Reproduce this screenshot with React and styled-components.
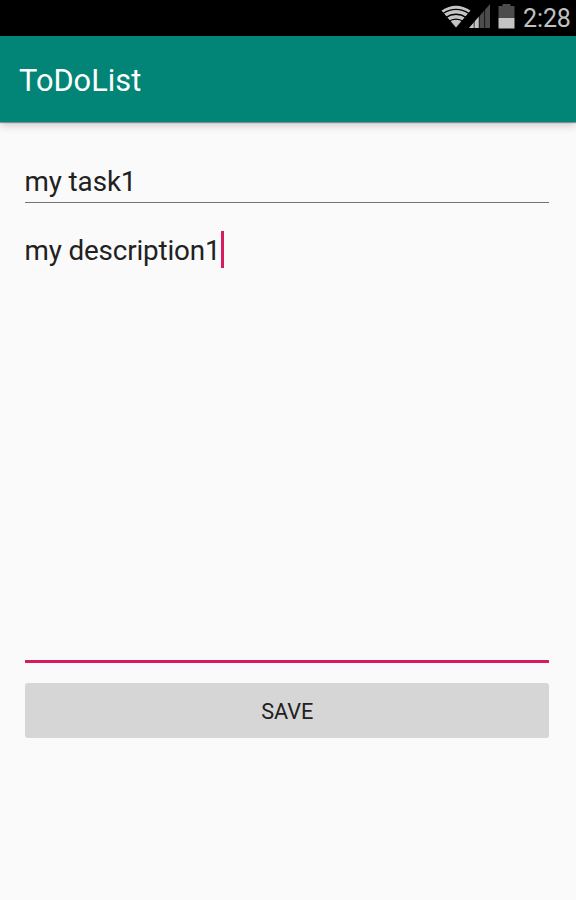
import React from "react";
import styled, { createGlobalStyle } from "styled-components";

const GlobalStyle = createGlobalStyle`
  * { box-sizing: border-box; }
  body { margin: 0; background: #fafafa; overflow: hidden; }
`;

const Screen = styled.div`
  width: 576px;
  height: 900px;
  display: flex;
  flex-direction: column;
  background: #fafafa;
  color: #212121;
  font-family: Roboto, "Liberation Sans", sans-serif;
`;

const StatusBar = styled.header`
  height: 36px;
  flex: none;
  display: flex;
  justify-content: flex-end;
  padding-right: 5px;
  background: #000;
`;

const StatusIcons = styled.svg`
  width: 80px;
  height: 36px;
  flex: none;
`;

const Clock = styled.time`
  margin-left: 3px;
  width: 48px;
  padding-top: 1px;
  white-space: nowrap;
  font-size: 25px;
  line-height: 35px;
  letter-spacing: -0.1px;
  color: #c1c1c1;
`;

const AppBar = styled.div`
  height: 86px;
  flex: none;
  display: flex;
  align-items: center;
  padding: 4px 0 0 19px;
  background: #028577;
  box-shadow: 0 1px 1px rgba(0, 0, 0, 0.36), 0 4px 8px rgba(0, 0, 0, 0.17);
`;

const Title = styled.h1`
  margin: 0;
  font-size: 30.7px;
  line-height: 36px;
  font-weight: 400;
  letter-spacing: 0.05px;
  color: #fff;
`;

const Form = styled.main`
  display: flex;
  flex-direction: column;
  padding: 42px 27px 0 24.5px;
`;

const Field = styled.div`
  display: flex;
  align-items: flex-start;
  height: ${(p) => p.$height}px;
  margin-top: ${(p) => p.$gap || 0}px;
  border-bottom: ${(p) => (p.$focused ? "3px solid #d81b60" : "1px solid #737373")};
`;

const FieldText = styled.span`
  padding-top: ${(p) => p.$drop || 0}px;
  font-size: 27.8px;
  line-height: 36px;
  letter-spacing: ${(p) => p.$tracking || 0}px;
  white-space: nowrap;
`;

const Caret = styled.span`
  width: 3px;
  height: 37px;
  margin-left: 1px;
  background: #d81b60;
`;

const SaveButton = styled.button`
  height: 55px;
  margin-top: 20px;
  padding: 2px 0 0 1px;
  border: 0;
  border-radius: 3px;
  background: #d6d6d6;
  color: #212121;
  font: 400 21.7px/26px Roboto, "Liberation Sans", sans-serif;
`;

function StatusGlyphs() {
  return (
    <StatusIcons viewBox="440 0 80 36" aria-hidden="true">
      <path d="M441.5 10.5Q456 0.8 470.5 10.5L456 27.5Z" fill="#c4c4c4" />
      <g fill="none" stroke="#000" strokeWidth="1.3">
        <path d="M443 13.5Q456 5.3 469 13.5" />
        <path d="M445.5 17.6Q456 10.9 466.5 17.6" />
        <path d="M448.5 21.6Q456 16.6 463.5 21.6" />
      </g>
      <path d="M469 28L490 4V28Z" fill="#4c4c4c" />
      <path d="M469 28L479 16.6V28Z" fill="#c4c4c4" />
      <path d="M474.2 18V28M479.2 14V28M484.6 8V28" stroke="#000" strokeWidth="0.7" />
      <path d="M498.5 6H502.5V4H510.5V6H514.5V18H498.5Z" fill="#4c4c4c" />
      <path d="M498.5 18H514.5V28.5H498.5Z" fill="#c4c4c4" />
    </StatusIcons>
  );
}

export default function App() {
  return (
    <Screen>
      <GlobalStyle />
      <StatusBar>
        <StatusGlyphs />
        <Clock>2:28</Clock>
      </StatusBar>
      <AppBar>
        <Title>ToDoList</Title>
      </AppBar>
      <Form>
        <Field $height={39}>
          <FieldText $tracking={-0.1}>my task1</FieldText>
        </Field>
        <Field $height={432} $gap={28} $focused>
          <FieldText $drop={2} $tracking={-0.15}>my description1</FieldText>
          <Caret />
        </Field>
        <SaveButton type="button">SAVE</SaveButton>
      </Form>
    </Screen>
  );
}
